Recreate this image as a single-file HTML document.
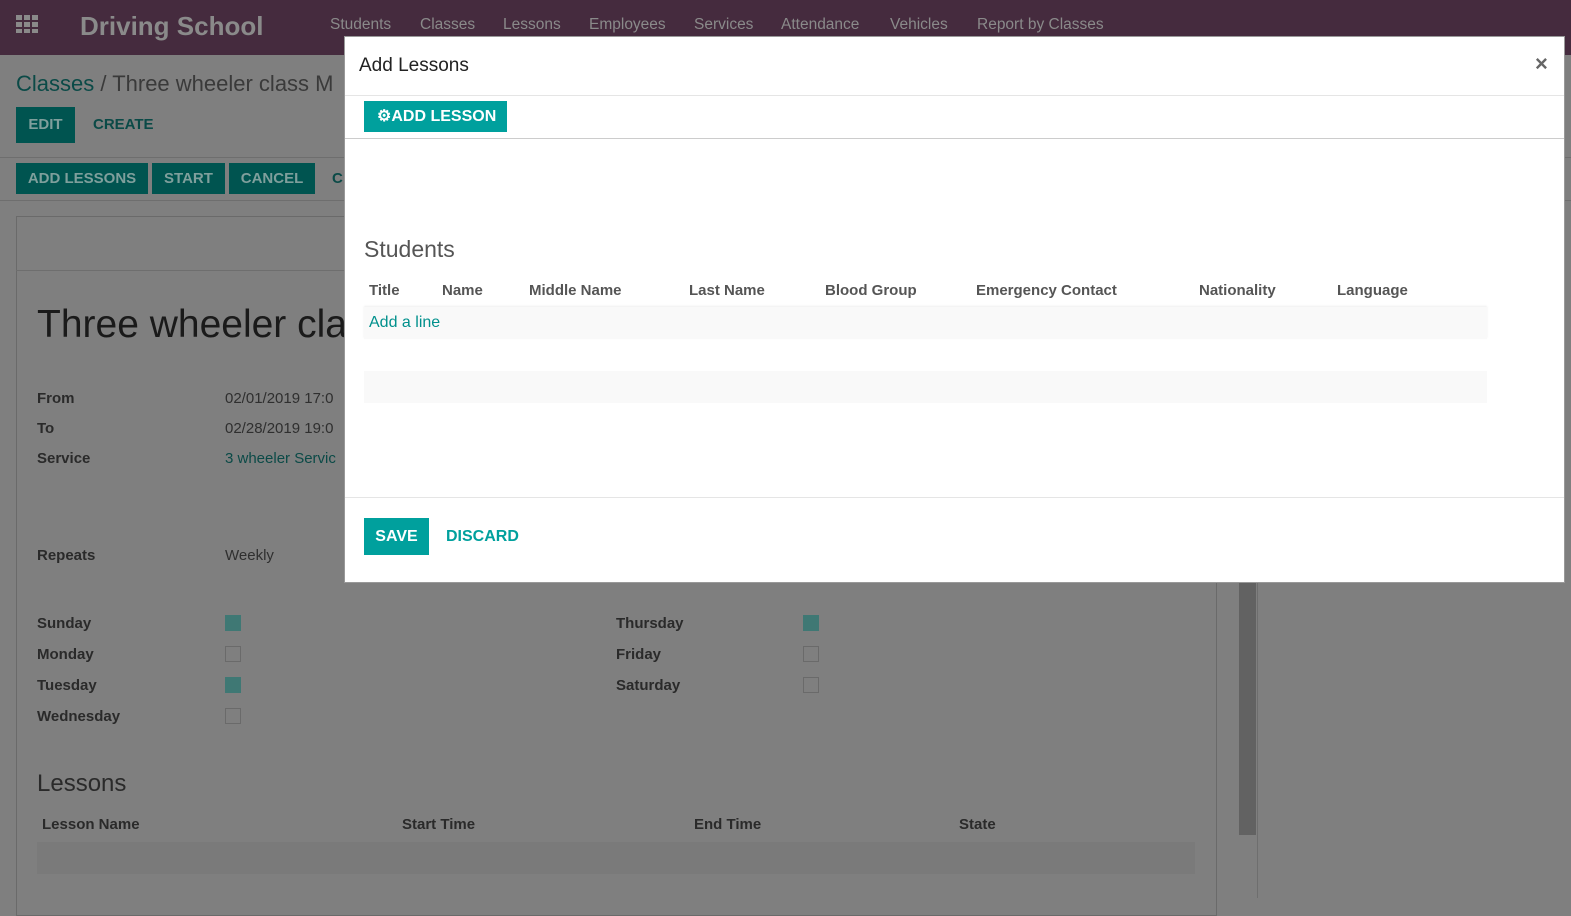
<!DOCTYPE html>
<html><head><style>
*{margin:0;padding:0;box-sizing:border-box}
body{width:1571px;height:898px;overflow:hidden;background:#7f7f7f;font-family:"Liberation Sans",sans-serif;position:relative}
.a{position:absolute;white-space:nowrap}
.top{left:0;top:0;width:1571px;height:55px;background:#452b3e}
.nav{color:#8a8a8a;font-size:15.5px;top:16px}
.btn{background:#005450;color:#7f9f9c;font-size:15px;font-weight:bold;height:31px;line-height:31px;text-align:center}
.lbl{color:#2a2a2a;font-weight:bold;font-size:15px}
.val{color:#2f2f2f;font-size:15px}
.cb{width:16px;height:16px;border:1px solid #6a6a6a}
.cbc{width:16px;height:16px;background:#3f7874}
.modal{left:344px;top:36px;width:1221px;height:547px;background:#fff;border:1px solid #999}
.th{color:#555;font-weight:bold;font-size:15px;top:282px}
</style></head><body>
<div class="a top"></div>
<div class="a" style="left:16px;top:15px;width:24px;height:18px;background:repeating-linear-gradient(90deg,#8a8a8a 0 6px,transparent 6px 8px);-webkit-mask:repeating-linear-gradient(#000 0 5px,transparent 5px 7px)"></div>
<div class="a" style="left:80px;top:11px;font-size:26px;font-weight:bold;color:#8a8a8a">Driving School</div>
<div class="a nav" style="left:330px">Students</div><div class="a nav" style="left:420px">Classes</div><div class="a nav" style="left:503px">Lessons</div><div class="a nav" style="left:589px">Employees</div><div class="a nav" style="left:694px">Services</div><div class="a nav" style="left:781px">Attendance</div><div class="a nav" style="left:890px">Vehicles</div><div class="a nav" style="left:977px">Report by Classes</div>
<div class="a" style="left:16px;top:71px;font-size:22px;color:#3a3a3a"><span style="color:#0b4a47">Classes</span> / Three wheeler class M</div>
<div class="a btn" style="left:16px;top:107px;width:59px;height:36px;line-height:36px">EDIT</div>
<div class="a" style="left:93px;top:116px;color:#0b4a47;font-weight:bold;font-size:15px">CREATE</div>
<div class="a" style="left:0;top:157px;width:1571px;height:1px;background:#6e6e6e"></div>
<div class="a btn" style="left:16px;top:163px;width:132px">ADD LESSONS</div>
<div class="a btn" style="left:152px;top:163px;width:73px">START</div>
<div class="a btn" style="left:229px;top:163px;width:86px">CANCEL</div>
<div class="a" style="left:332px;top:170px;color:#0b4a47;font-weight:bold;font-size:15px">C</div>
<div class="a" style="left:0;top:200px;width:1571px;height:1px;background:#6e6e6e"></div>
<div class="a" style="left:16px;top:216px;width:1201px;height:700px;border:1px solid #6a6a6a"></div>
<div class="a" style="left:16px;top:270px;width:1201px;height:1px;background:#6e6e6e"></div>
<div class="a" style="left:1239px;top:580px;width:17px;height:255px;background:#626262"></div>
<div class="a" style="left:1257px;top:580px;width:1px;height:318px;background:#6e6e6e"></div>
<div class="a" style="left:37px;top:303px;font-size:39px;color:#1a1a1a">Three wheeler cla</div>
<div class="a lbl" style="left:37px;top:390px">From</div><div class="a val" style="left:225px;top:390px">02/01/2019 17:0</div>
<div class="a lbl" style="left:37px;top:420px">To</div><div class="a val" style="left:225px;top:420px">02/28/2019 19:0</div>
<div class="a lbl" style="left:37px;top:450px">Service</div><div class="a val" style="left:225px;top:450px;color:#0b4a47">3 wheeler Servic</div>
<div class="a lbl" style="left:37px;top:547px">Repeats</div><div class="a val" style="left:225px;top:547px">Weekly</div>
<div class="a lbl" style="left:37px;top:615px">Sunday</div><div class="a cbc" style="left:225px;top:615px"></div>
<div class="a lbl" style="left:37px;top:646px">Monday</div><div class="a cb" style="left:225px;top:646px"></div>
<div class="a lbl" style="left:37px;top:677px">Tuesday</div><div class="a cbc" style="left:225px;top:677px"></div>
<div class="a lbl" style="left:37px;top:708px">Wednesday</div><div class="a cb" style="left:225px;top:708px"></div>
<div class="a lbl" style="left:616px;top:615px">Thursday</div><div class="a cbc" style="left:803px;top:615px"></div>
<div class="a lbl" style="left:616px;top:646px">Friday</div><div class="a cb" style="left:803px;top:646px"></div>
<div class="a lbl" style="left:616px;top:677px">Saturday</div><div class="a cb" style="left:803px;top:677px"></div>
<div class="a" style="left:37px;top:770px;font-size:24px;color:#2a2a2a">Lessons</div>
<div class="a lbl" style="left:42px;top:816px">Lesson Name</div><div class="a lbl" style="left:402px;top:816px">Start Time</div><div class="a lbl" style="left:694px;top:816px">End Time</div><div class="a lbl" style="left:959px;top:816px">State</div>
<div class="a" style="left:37px;top:842px;width:1158px;height:32px;background:#7a7a7a"></div>
<div class="a modal"></div>
<div class="a" style="left:359px;top:55px;font-size:19px;color:#222">Add Lessons</div>
<div class="a" style="left:1535px;top:51px;font-size:22px;color:#666;font-weight:bold">×</div>
<div class="a" style="left:345px;top:95px;width:1219px;height:1px;background:#e5e5e5"></div>
<div class="a" style="left:364px;top:101px;width:143px;height:31px;background:#00a09d;color:#fff;font-weight:bold;font-size:16px;line-height:31px;padding-left:13px">⚙ADD LESSON</div>
<div class="a" style="left:345px;top:138px;width:1219px;height:1px;background:#ccc"></div>
<div class="a" style="left:364px;top:236px;font-size:23px;color:#555">Students</div>
<div class="a th" style="left:369px">Title</div><div class="a th" style="left:442px">Name</div><div class="a th" style="left:529px">Middle Name</div><div class="a th" style="left:689px">Last Name</div><div class="a th" style="left:825px">Blood Group</div><div class="a th" style="left:976px">Emergency Contact</div><div class="a th" style="left:1199px">Nationality</div><div class="a th" style="left:1337px">Language</div>
<div class="a" style="left:364px;top:307px;width:1123px;height:32px;background:#f9f9f9;box-shadow:0 -1px 2px #eee"></div>
<div class="a" style="left:369px;top:314px;font-size:16px;color:#00908c">Add a line</div>
<div class="a" style="left:364px;top:371px;width:1123px;height:32px;background:#f9f9f9"></div>
<div class="a" style="left:345px;top:497px;width:1219px;height:1px;background:#e5e5e5"></div>
<div class="a" style="left:364px;top:518px;width:65px;height:37px;background:#00a09d;color:#fff;font-weight:bold;font-size:16px;line-height:37px;text-align:center">SAVE</div>
<div class="a" style="left:446px;top:528px;color:#00a09d;font-weight:bold;font-size:16px">DISCARD</div>
</body></html>
